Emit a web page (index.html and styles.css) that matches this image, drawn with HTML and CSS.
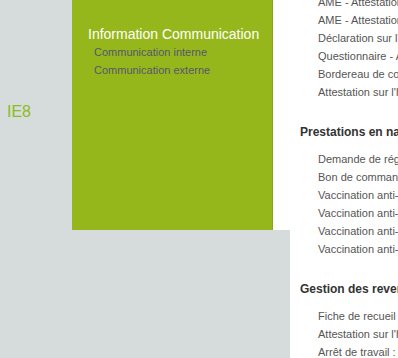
FILE: index.html
```html
<!DOCTYPE html>
<html lang="fr">
<head>
  <meta charset="UTF-8" />
  <title>Information Communication</title>
  <link rel="stylesheet" href="styles.css">
</head>
<body>

<div id="page">
  <div id="side">
    <div class="browser">IE8</div>
  </div>

  <div id="menuWrap">
    <div id="menuPanel">
      <div class="menuTitle">Information Communication</div>
      <ul class="menuLinks">
        <li>Communication interne</li>
        <li>Communication externe</li>
      </ul>
    </div>
  </div>

  <div id="content">
    <ul class="docs first">
      <li>AME - Attestation de ressources</li>
      <li>AME - Attestation sur l'honneur</li>
      <li>Déclaration sur l'honneur</li>
      <li>Questionnaire - Accident</li>
      <li>Bordereau de cotisations</li>
      <li>Attestation sur l'honneur</li>
    </ul>

    <h3>Prestations en nature</h3>
    <ul class="docs">
      <li>Demande de régularisation</li>
      <li>Bon de commande</li>
      <li>Vaccination anti-grippale</li>
      <li>Vaccination anti-grippale</li>
      <li>Vaccination anti-grippale</li>
      <li>Vaccination anti-grippale</li>
    </ul>

    <h3>Gestion des revenus</h3>
    <ul class="docs">
      <li>Fiche de recueil de données</li>
      <li>Attestation sur l'honneur</li>
      <li>Arrêt de travail : déclaration</li>
    </ul>
  </div>
</div>

</body>
</html>
```
FILE: styles.css
```css
body {
  background: #d6dcdc;
  margin: 0;
  padding: 0;
  font-family: "Liberation Sans", Arial, sans-serif;
  overflow: hidden;
}

#page {
  display: flex;
  align-items: flex-start;
  height: 358px;
}

#side {
  width: 72px;
  flex-shrink: 0;
  padding-top: 102px;
}

.browser {
  padding-left: 7px;
  font-size: 16px;
  line-height: 20px;
  color: #8dba1c;
}

#menuWrap {
  width: 218px;
  flex-shrink: 0;
  height: 230px;
  background: white;
}

#menuPanel {
  width: 201px;
  height: 230px;
  background: #96b71b;
  border-right: 1px solid #86a617;
  padding: 25px 0 0 16px;
  box-sizing: border-box;
}

.menuTitle {
  font-size: 14px;
  line-height: 18px;
  color: white;
}

.menuLinks {
  list-style: none;
  margin: 0;
  padding: 0 0 0 6px;
  font-size: 11px;
  line-height: 18px;
  color: #56566e;
}

#content {
  flex: 1;
  align-self: stretch;
  background: white;
  padding-left: 10px;
  overflow: hidden;
}

#content h3 {
  margin: 22px 0 9px 0;
  font-size: 12px;
  line-height: 18px;
  font-weight: bold;
  color: #333;
  white-space: nowrap;
}

.docs {
  list-style: none;
  margin: 0;
  padding: 0 0 0 18px;
  font-size: 11px;
  line-height: 18px;
  color: #555;
  white-space: nowrap;
}

.docs.first {
  margin-top: -7px;
}
```
